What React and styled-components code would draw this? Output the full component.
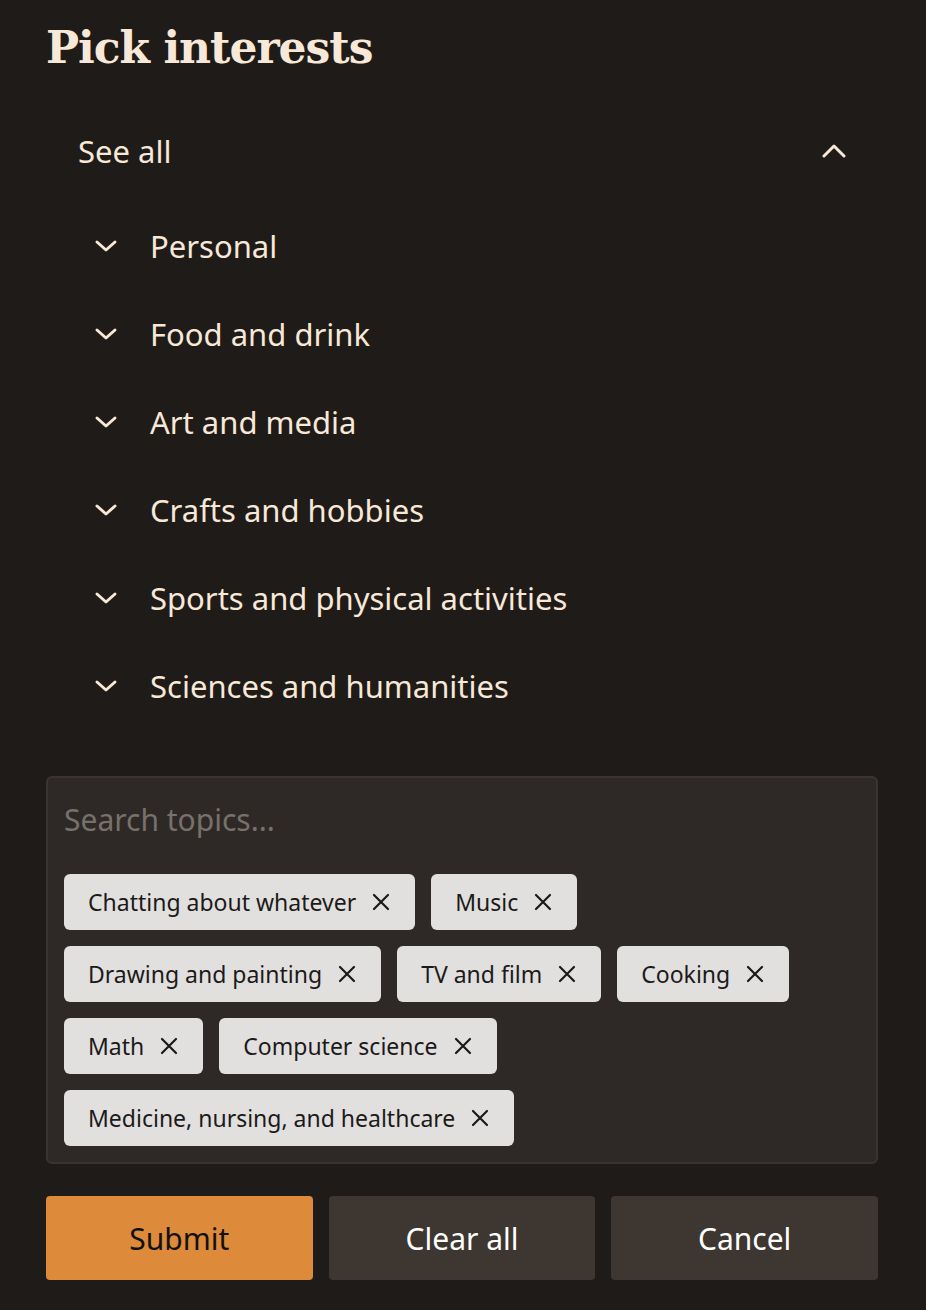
import React, { useState } from 'react';
import styled, { createGlobalStyle } from 'styled-components';

const GlobalStyle = createGlobalStyle`
  html, body {
    margin: 0;
    padding: 0;
    background: #1f1b18;
  }
  body {
    font-family: "Noto Sans", "Open Sans", sans-serif;
  }
`;

const categories = [
  'Personal',
  'Food and drink',
  'Art and media',
  'Crafts and hobbies',
  'Sports and physical activities',
  'Sciences and humanities',
];

const initialTopics = [
  'Chatting about whatever',
  'Music',
  'Drawing and painting',
  'TV and film',
  'Cooking',
  'Math',
  'Computer science',
  'Medicine, nursing, and healthcare',
];

const Chevron = ({ up }) => (
  <svg width="24" height="24" viewBox="0 0 24 24" fill="none">
    <path
      d={up ? 'M2 17L12 7L22 17' : 'M3 8L12 16L21 8'}
      stroke="#f8e8d8"
      strokeWidth="3"
      strokeLinecap="round"
      strokeLinejoin="round"
    />
  </svg>
);

const CloseIcon = () => (
  <svg width="20" height="20" viewBox="0 0 20 20" fill="none">
    <path d="M3 3L17 17M17 3L3 17" stroke="#1c1a19" strokeWidth="2.2" strokeLinecap="round" />
  </svg>
);

export default function App() {
  const [topics, setTopics] = useState(initialTopics);

  return (
    <Page>
      <GlobalStyle />
      <Title>Pick interests</Title>

      <SeeAll>
        <span>See all</span>
        <Chevron up />
      </SeeAll>

      <CategoryList>
        {categories.map((c) => (
          <Category key={c}>
            <Chevron />
            <span>{c}</span>
          </Category>
        ))}
      </CategoryList>

      <SearchBox>
        <SearchInput placeholder="Search topics..." />
        <Chips>
          {topics.map((t) => (
            <Chip key={t}>
              <span>{t}</span>
              <ChipClose onClick={() => setTopics(topics.filter((x) => x !== t))}>
                <CloseIcon />
              </ChipClose>
            </Chip>
          ))}
        </Chips>
      </SearchBox>

      <Actions>
        <Button $primary>Submit</Button>
        <Button onClick={() => setTopics([])}>Clear all</Button>
        <Button>Cancel</Button>
      </Actions>
    </Page>
  );
}

const Page = styled.div`
  width: 926px;
  min-height: 1310px;
  box-sizing: border-box;
  padding: 18px 48px 0 46px;
  background: #1f1b18;
`;

const Title = styled.h1`
  margin: 0;
  font-family: "DejaVu Serif", "Liberation Serif", serif;
  font-weight: 700;
  font-size: 44px;
  line-height: 60px;
  color: #f8e8d8;
  letter-spacing: -1px;
`;

const SeeAll = styled.div`
  display: flex;
  align-items: center;
  justify-content: space-between;
  padding: 0 32px;
  height: 70px;
  margin-top: 38px;
  color: #f8e8d8;
  font-size: 31px;
`;

const CategoryList = styled.div`
  display: flex;
  flex-direction: column;
  padding: 16px 0 46px 48px;
`;

const Category = styled.div`
  display: flex;
  align-items: center;
  gap: 32px;
  height: 88px;
  color: #f8e8d8;
  font-size: 31px;
`;

const SearchBox = styled.div`
  box-sizing: border-box;
  border: 2px solid #3a3430;
  border-radius: 6px;
  background: #2e2926;
  padding: 16px;
`;

const SearchInput = styled.input`
  display: block;
  width: 100%;
  box-sizing: border-box;
  border: none;
  outline: none;
  background: transparent;
  padding: 0;
  height: 50px;
  font-family: "Noto Sans", "Open Sans", sans-serif;
  font-size: 30px;
  color: #f8e8d8;

  &::placeholder {
    color: #77716b;
  }
`;

const Chips = styled.div`
  display: flex;
  flex-wrap: wrap;
  gap: 16px;
  margin-top: 30px;
`;

const Chip = styled.div`
  display: flex;
  align-items: center;
  gap: 15px;
  height: 56px;
  box-sizing: border-box;
  padding: 0 24px;
  border-radius: 6px;
  background: #e1e0df;
  color: #1c1a19;
  font-size: 23px;
`;

const ChipClose = styled.button`
  display: flex;
  align-items: center;
  border: none;
  background: none;
  padding: 0;
  cursor: pointer;
`;

const Actions = styled.div`
  display: grid;
  grid-template-columns: repeat(3, 1fr);
  gap: 16px;
  margin-top: 32px;
`;

const Button = styled.button`
  height: 84px;
  border: none;
  border-radius: 4px;
  font-family: "Noto Sans", "Open Sans", sans-serif;
  font-size: 30px;
  background: ${(p) => (p.$primary ? '#dd8a3a' : '#3d3631')};
  color: ${(p) => (p.$primary ? '#111' : '#fff')};
  cursor: pointer;
`;
